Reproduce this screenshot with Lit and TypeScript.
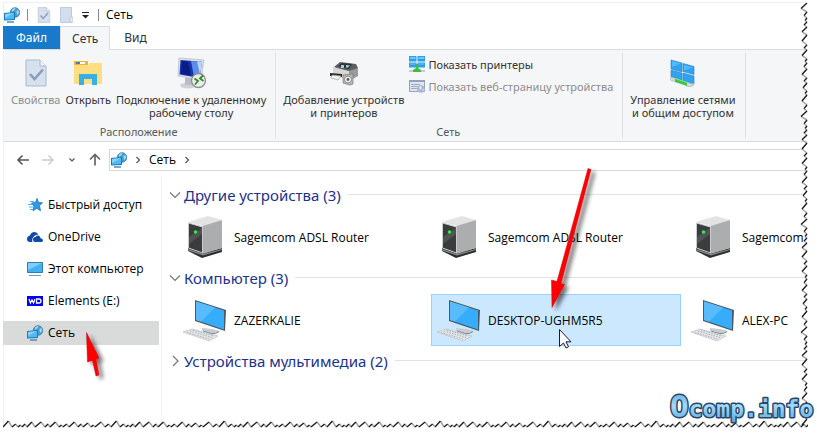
import { LitElement, html, svg, css } from "lit";
import { customElement } from "lit/decorators.js";
import { classMap } from "lit/directives/class-map.js";

const network = html`<svg class="ic" viewBox="0 0 16 16" width="16" height="16" aria-hidden="true">
  <circle cx="11" cy="5.500" r="4.800" fill="#4a9fd0" stroke="#3b7ea6" stroke-width=".8" />
  <path d="M8 2.500q2-2 3.500-1.500l-1 2-1.500 1-1 1zM12.500 4l2-1 .5 3-2 2z" fill="#a9d8ef" />
  <path d="M0 6l11-1v8L0 13.500z" fill="#1f78b4" />
  <path d="M1 7l9-1v6l-9 .5z" fill="#4fb9f5" /><path d="M1 7l9-1-9 5z" fill="#86d3fb" />
  <path d="M3 15h7" stroke="#4d8db4" stroke-width="1.500" />
</svg>`;

const docCheck = (w: number, h: number) => html`<svg class="ic" viewBox="0 0 22 28" width=${w} height=${h} aria-hidden="true">
  <path d="M1 1h14l6 6v20H1z" fill="#d6e0ee" stroke="#a9b9d0" />
  <path d="M15 1v6h6" fill="#eef3f9" stroke="#a9b9d0" />
  <path d="M5 15l4.500 5L18 10.500" fill="none" stroke="#8c9dbb" stroke-width="2.600" />
</svg>`;

const folder = html`<svg class="ic" viewBox="0 0 30 26" width="30" height="26" aria-hidden="true">
  <path d="M1 1h14v4h-14z" fill="#f3b52a" /><path d="M3 2h9v2H3z" fill="#fff" /><path d="M3 2h4v2H3z" fill="#3f7fc4" />
  <path d="M1 5h14l2-2h12v21H1z" fill="#fcdf83" />
  <path d="M6 25V14h18v11h-5v-6h-8v6z" fill="#36b1e5" />
</svg>`;

const remote = html`<svg class="ic" viewBox="0 0 32 32" width="32" height="32" aria-hidden="true">
  <ellipse cx="13" cy="28.500" rx="8" ry="3" fill="#cfd1d6" /><path d="M10 21h7v7h-7z" fill="#b9bcc4" />
  <path d="M4 1l25 2-3 20-23-4z" fill="#dfe2ea" stroke="#b5b9c5" stroke-width=".7" />
  <path d="M5.500 3 27 4.700 24.500 21 4.500 17.500z" fill="#1733ae" />
  <path d="M16 4l11 .7L24.500 21 19 20z" fill="#5d8ee9" /><path d="M22 4.300l5 .4-2 13z" fill="#bcd6fb" />
  <path d="M7 4l6 .5 3 14-10-2z" fill="#0a1d84" />
  <circle cx="23.500" cy="23.500" r="7" fill="#ececec" stroke="#8b8b8b" stroke-width="1.300" />
  <path d="M19.500 21.500l3.500 2.500-3 3.500M28 18.500l-3 3 3.500 2.500" fill="none" stroke="#2b8f2e" stroke-width="1.800" />
</svg>`;

const printer = html`<svg class="ic" viewBox="0 0 30 26" width="30" height="26" aria-hidden="true">
  <path d="M5 7l6-5 16 2 2 4-9 6z" fill="#5c5f63" /><path d="M9 6l4-3 10 1-3 5z" fill="#303438" />
  <path d="M12 5h3v3h-3zM17 5l4 .5-2 2h-2z" fill="#9fd1dd" />
  <path d="M4 7l16 4v9L4 15z" fill="#d7d7d5" /><path d="M20 11l9-3v8l-9 5z" fill="#9a9a98" />
  <path d="M1 13l12 1v3L1 16z" fill="#26282a" /><path d="M3 15l9 1-3 4-7-2z" fill="#f4f4f4" stroke="#999" stroke-width=".6" />
  <path d="M14 15l10-1v10l-3 1-7-2z" fill="#bdbdbb" stroke="#777" stroke-width=".7" />
  <circle cx="19" cy="19.500" r="3.500" fill="#efefef" stroke="#777" stroke-width=".8" /><circle cx="19" cy="19.500" r="1.400" fill="#55585b" />
</svg>`;

const panes = html`<svg class="ic" viewBox="0 0 16 16" width="16" height="16" aria-hidden="true">
  <path d="M0 0h7.500v5.500H0zM8.500 0H16v5.500H8.500zM0 6.500h7.500v5H0zM8.500 6.500H16v5H8.500z" fill="#2f9fe6" />
  <path d="M1 1h5.500v2H1zM9.500 1H15v2H9.500zM1 7.500h5.500v1H1zM9.500 7.500H15v1H9.500z" fill="#6cc5fb" />
  <path d="M0 14h16v2H0z" fill="#c7cccf" /><path d="M7 8h2v4l3 2v2H4v-2l3-2z" fill="#3fbd3c" />
</svg>`;

const webpage = html`<svg class="ic" viewBox="0 0 16 14" width="16" height="14" aria-hidden="true">
  <path d="M.5 1.500h15v11H.5z" fill="#dfe6f0" stroke="#93a3bd" /><path d="M0 1h16v2H0z" fill="#93a3bd" />
  <path d="M2 5.500h9M2 7.500h7M2 9.500h7" stroke="#9eabc0" /><circle cx="12" cy="10" r="3.800" fill="#a9b8ce" />
  <path d="M10 8l2-1 1 2-2 2zM13 10h2l-1 2z" fill="#dce4ee" />
</svg>`;

const center = html`<svg class="ic" viewBox="0 0 25 28" width="25" height="28" aria-hidden="true">
  <path d="M1 1l11 3v9L1 10zM13 4.500l11 3v8l-11-3zM1 11l11 3v7L1 18zM13 14l11 3v8l-11-3z" fill="#2fa2f0" stroke="#2383c9" stroke-width=".6" />
  <path d="M2 2l9 2.500L2 8zM14 6l9 2.500-9 3z" fill="#55b8fa" />
  <path d="M0 19q1-2 4 0l3 1v3l-6-1.500zM17 23l5 2 2-1v2l-3 2-5-1z" fill="#d5d8da" stroke="#9fa3a6" stroke-width=".5" />
  <path d="M5 19l12 4v4L5 23z" fill="#43c24a" /><path d="M5 19l12 4v1L5 20z" fill="#8be28a" />
</svg>`;

const star = html`<svg class="ic" viewBox="0 0 16 14" width="16" height="14" aria-hidden="true">
  <path d="M10 .5l1.500 4 4 .3-3 2.900 1 5-3.700-2.400L6 12.700 7 8.400 4.500 5l4-.5z" fill="#2d9be8" stroke="#1b6fb4" stroke-width=".8" />
  <path d="M3 3.500h4M1 6.500h5M2 9h4M3 11.500h3" stroke="#4fb0ee" />
</svg>`;

const cloud = html`<svg class="ic" viewBox="0 0 16 12" width="16" height="12" aria-hidden="true">
  <path d="M0 8q0-3 3-3.500Q4 1 7.500 1q2.500 0 4 2.500-4 0-6 4-.8 1.700 0 3.500H3Q0 11 0 8z" fill="#0f4ba3" />
  <path d="M6 8.500Q6 6 8.500 6q1.500-2 3.500-1.200 1.500.7 1.500 2.400 2.500.3 2.500 2.300 0 1.500-2 1.500H8q-2 0-2-2.500z" fill="#0f4ba3" />
</svg>`;

const pc = html`<svg class="ic" viewBox="0 0 16 14" width="16" height="14" aria-hidden="true">
  <path d="M.5.5h15v10H.5z" fill="#43b0f1" stroke="#2d7fb3" /><path d="M1 1h14L1 8z" fill="#7fcdf8" /><path d="M2 13.500h12" stroke="#6a9dbd" />
</svg>`;

const wd = html`<svg class="ic" viewBox="0 0 16 10" width="16" height="10" aria-hidden="true">
  <path d="M0 0h16v10H0z" fill="#0000f2" /><path d="M2 3l1.500 4L5 4l1.500 3L8 3M9 3h3q2 0 2 2t-2 2H9.500V4" fill="none" stroke="#fff" stroke-width="1.300" />
</svg>`;

const router = html`<svg class="big" viewBox="0 0 43 44" width="43" height="44" aria-hidden="true">
  <path d="M5 36l14 7 20-6v-4l-19 5-15-5z" fill="#2b2d2e" /><path d="M5 34l15 5 19-5v1l-19 5.500L5 35.500z" fill="#888" />
  <path d="M5 7 25 1l14 4-19 6z" fill="#e2e3e3" />
  <path d="M19.500 11 39 5v28l-19.500 6z" fill="#abadae" />
  <path d="M5.500 8l14 4v26l-14-5z" fill="#3a3d3e" stroke="#c9cbcb" /><path d="M6 22l13-9v6L6 29z" fill="#505354" />
  <circle cx="12.500" cy="17" r="1.800" fill="#2ff03a" />
</svg>`;

const computer = html`<svg class="big" viewBox="0 0 43 44" width="43" height="44" aria-hidden="true">
  <path d="M19 30l10 1 8 2q-4 4-9 3l-8-3q-2-1-1-3z" fill="#c6ccd1" /><path d="M20 33l8 2.500q5 1 8-2" fill="none" stroke="#858c92" />
  <path d="M12 2l31 10-1 21-30-10z" fill="#4d5860" /><path d="M13 3.500 41 12.500v19L13 22z" fill="#36adfb" />
  <path d="M13 3.500l19 6L18 23.500l-5-1.500z" fill="#58bcfc" />
  <path d="M0 34l9-3 26 7-9 5z" fill="#e3e5e8" stroke="#b6babe" stroke-width=".6" />
  <path d="M4 34.500l22 6.500M7 33l22 6.500M10 32l21 6" stroke="#aeb3b8" stroke-dasharray="1.500 1.200" />
</svg>`;

const chev = (d: string, cls: string) => html`<svg class=${cls} viewBox="0 0 12 12" width="12" height="12" aria-hidden="true"><path d=${d} fill="none" stroke="currentColor" stroke-width="1.2" /></svg>`;
const RIGHT = "M4.500 3l3 3-3 3";
const DOWN = "M3.500 4.500L6 7l2.500-2.500";

/* Depth and length of each tooth along the torn paper edge. */
const TEETH: [number, number][] = [[7, 9], [4, 6], [3, 4], [4, 5], [6, 8], [6, 10], [4, 5], [6, 9], [3, 4], [4, 6], [6, 9], [4, 5], [5, 8], [3, 4], [6, 10], [4, 6]];
const TEAR = TEETH.reduce((sum, t) => sum + t[1], 0);

const tear = (vertical: boolean) => {
  const at = (depth: number, along: number) => (vertical ? `${8 - depth} ${along}` : `${along} ${8 - depth}`);
  let along = 0;
  let edge = `M${at(0, 0)}`;
  let dark = "";
  let soft = "";
  for (const [depth, len] of TEETH) {
    const mid = along + len * 0.6;
    edge += `L${at(depth, mid)}L${at(0, along + len)}`;
    dark += `M${at(1, along)}L${at(depth, mid)}`;
    soft += `M${at(depth, mid)}L${at(1, along + len)}`;
    along += len;
  }
  const id = vertical ? "tear-v" : "tear-h";
  return html`<svg class=${vertical ? "tear-right" : "tear-bottom"} aria-hidden="true">
    <defs><pattern id=${id} width=${vertical ? 12 : TEAR} height=${vertical ? TEAR : 12} patternUnits="userSpaceOnUse">
      ${svg`<path d="${edge}${vertical ? `V${TEAR}H12V0` : `H${TEAR}V12H0`}z" fill="#fff" />
      <path d=${soft} fill="none" stroke="#a4a4a4" stroke-width="1.5" />
      <path d=${dark} fill="none" stroke="#1c1c1c" stroke-width="1.4" />`}
    </pattern></defs>
    <rect width="100%" height="100%" fill="url(#${id})" />
  </svg>`;
};

@customElement("app-root")
export class AppRoot extends LitElement {
  static styles = css`
    :host { display: block; font: 12px/13px "Open Sans", "Noto Sans", sans-serif; color: #000; background: #fff; }
    * { box-sizing: border-box; }
    button { font: inherit; color: inherit; background: none; border: 0; padding: 0; margin: 0; text-align: inherit; }
    a { color: inherit; text-decoration: none; }
    svg { display: block; flex: none; }
    .page { position: relative; min-height: 100vh; padding: 2px 9px 8px 3px; display: flex; overflow: hidden; }
    .window { flex: 1; min-width: 0; display: flex; flex-direction: column; border: 1px solid #f0f0f0; border-width: 1px 0 0 1px; }
    .title { height: 23px; display: flex; align-items: center; }
    .title .sep { width: 1px; height: 12px; background: #8a8a8a; }
    .quick { display: flex; align-items: center; gap: 9px; padding: 0 7px; }
    .tabs, .ribbon { font-family: "Noto Sans", sans-serif; font-size: 11px; }
    .tabs { display: flex; height: 23px; }
    .tab { padding: 0 14px; color: #333; font-size: 12px; }
    .file { background: #1979ca; color: #fff; margin-left: -1px; padding: 0 13px; }
    .active { background: #f5f6f7; border: 1px solid #dadbdc; border-bottom: 0; margin-bottom: -1px; position: relative; padding: 0 11px; }
    .ribbon { display: flex; height: 93px; background: #f5f6f7; border: 1px solid #dadbdc; border-width: 1px 0; padding: 3px 0; color: #444; }
    .group { display: flex; flex-direction: column; border-right: 1px solid #dfe0e1; padding: 0 9px 0 7px; }
    .tools { display: flex; flex: 1; gap: 5px; }
    .tool { display: flex; flex-direction: column; align-items: center; text-align: center; white-space: pre; color: #333; }
    .pic { height: 40px; display: flex; align-items: center; }
    .off { color: #8d8d8d; }
    .cap { text-align: center; line-height: 13px; color: #5a5a5a; }
    .list { display: flex; flex-direction: column; gap: 6px; padding-top: 3px; }
    .small { display: flex; align-items: center; gap: 3px; height: 16px; color: #333; white-space: nowrap; }
    .small.off { color: #8d8d8d; }
    .address { display: flex; align-items: center; padding-top: 6px; height: 29px; color: #555; }
    .nav { display: flex; align-items: center; gap: 11px; padding: 0 8px 0 12px; }
    .path { flex: 1; height: 22px; display: flex; align-items: center; gap: 5px; border: 1px solid #d9d9d9; border-right: 0; padding-left: 1px; }
    .path button { color: #000; }
    .body { display: flex; flex: 1; padding-top: 6px; }
    aside { width: 158px; border-right: 1px solid #f0f0f0; padding: 16px 2px 0 0; display: flex; flex-direction: column; gap: 8px; }
    .place { display: flex; align-items: center; gap: 5px; height: 24px; padding: 0 0 1px 24px; margin-left: -1px; }
    .current { background: #d9dbdb; }
    main { flex: 1; min-width: 0; padding: 3px 0 0 7px; overflow: hidden; }
    .head { display: flex; align-items: center; gap: 3px; height: 31px; font-family: "Noto Sans", sans-serif; font-size: 15px; line-height: 20px; padding-bottom: 2px; color: #1e3287; width: 100%; white-space: nowrap; }
    .head .rule { flex: 1; height: 1px; background: #e2e2e2; margin-left: 4px; }
    .fold { color: #777; }
    .tiles { display: flex; gap: 4px; padding-left: 8px; }
    .tile { flex: none; width: 250px; height: 52px; display: flex; align-items: center; gap: 8px; padding: 0 5px; border: 1px solid transparent; white-space: nowrap; }
    .picked { background: #cce8ff; border-color: #99d1ff; }
    .tear-right { position: absolute; right: 5px; top: 3px; width: 12px; height: calc(100% - 13px); }
    .tear-bottom { position: absolute; left: 3px; bottom: 4px; width: calc(100% - 12px); height: 12px; }
    .notes { position: absolute; left: 0; top: 0; }
    .logo { position: absolute; right: 0; bottom: 0; }
    .mark { font: bold 23px "DejaVu Sans Mono", monospace; }
    .initial { font-size: 31px; }
  `;

  private places = [
    { icon: star, text: "Быстрый доступ" },
    { icon: cloud, text: "OneDrive" },
    { icon: pc, text: "Этот компьютер" },
    { icon: wd, text: "Elements (E:)" },
    { icon: network, text: "Сеть", current: true },
  ];

  private groups = [
    { name: "Другие устройства (3)", icon: router, open: true, items: ["Sagemcom ADSL Router", "Sagemcom ADSL Router", "Sagemcom"] },
    { name: "Компьютер (3)", icon: computer, open: true, items: ["ZAZERKALIE", "DESKTOP-UGHM5R5", "ALEX-PC"] },
    { name: "Устройства мультимедиа (2)", icon: router, open: false, items: [] },
  ];

  private tool(icon: unknown, text: string, off = false) {
    return html`<button class=${classMap({ tool: true, off })} ?disabled=${off}><span class="pic">${icon}</span>${text}</button>`;
  }

  render() {
    return html`<div class="page">
      <div class="window">
        <header class="title">
          ${network}
          <div class="quick">
            <span class="sep"></span>${docCheck(14, 16)}
            <svg width="13" height="16" viewBox="0 0 13 16" aria-hidden="true"><path d="M.5.5h11v15H.5z" fill="#d3deed" stroke="#bccbe0" /><path d="M10 10h3v5h-3z" fill="#e8eef6" stroke="#bccbe0" /></svg>
            <svg width="7" height="8" viewBox="0 0 7 8" aria-hidden="true"><path d="M0 1.500h7" stroke="#222" /><path d="M0 4h7L3.500 7.500z" fill="#222" /></svg>
            <span class="sep"></span>
          </div>
          <span>Сеть</span>
        </header>
        <nav class="tabs"><button class="tab file">Файл</button><button class="tab active">Сеть</button><button class="tab">Вид</button></nav>
        <section class="ribbon">
          <div class="group">
            <div class="tools">${this.tool(docCheck(22, 28), "Свойства", true)}${this.tool(folder, "Открыть")}${this.tool(remote, "Подключение к удаленному\nрабочему столу")}</div>
            <div class="cap">Расположение</div>
          </div>
          <div class="group">
            <div class="tools">${this.tool(printer, "Добавление устройств\nи принтеров")}
              <div class="list"><button class="small">${panes}Показать принтеры</button><button class="small off" disabled>${webpage}Показать веб-страницу устройства</button></div>
            </div>
            <div class="cap">Сеть</div>
          </div>
          <div class="group"><div class="tools">${this.tool(center, "Управление сетями\nи общим доступом")}</div></div>
        </section>
        <div class="address">
          <div class="nav">
            <button aria-label="Назад"><svg width="14" height="12" viewBox="0 0 14 12"><path d="M13 6H2M6.500 1.500L2 6l4.500 4.500" fill="none" stroke="#555" stroke-width="1.600" /></svg></button>
            <button aria-label="Вперед"><svg width="14" height="12" viewBox="0 0 14 12"><path d="M1 6h11M7.500 1.500L12 6l-4.500 4.500" fill="none" stroke="#ccc" stroke-width="1.400" /></svg></button>
            <button aria-label="Недавние">${chev(DOWN, "mini")}</button>
            <button aria-label="Вверх"><svg width="12" height="13" viewBox="0 0 12 13"><path d="M6 12.500V2M1 6.500L6 1.500l5 5" fill="none" stroke="#666" stroke-width="1.700" /></svg></button>
          </div>
          <div class="path">${network}${chev(RIGHT, "mini")}<button>Сеть</button>${chev(RIGHT, "mini")}</div>
        </div>
        <div class="body">
          <aside>${this.places.map((p) => html`<a href="#" class=${classMap({ place: true, current: !!p.current })}>${p.icon}<span>${p.text}</span></a>`)}</aside>
          <main>${this.groups.map((g) => html`
            <button class="head" aria-expanded=${g.open ? "true" : "false"}>${chev(g.open ? "M1 3.500l5 5 5-5" : "M4 1l5 5-5 5", "fold")}<span>${g.name}</span><span class="rule"></span></button>
            ${g.items.length ? html`<div class="tiles">${g.items.map((t) => html`<button class=${classMap({ tile: true, picked: t.startsWith("DESKTOP") })}>${g.icon}<span>${t}</span></button>`)}</div>` : ""}`)}
          </main>
        </div>
      </div>
      ${tear(true)}${tear(false)}
      <svg class="notes" width="600" height="390" viewBox="0 0 600 390" aria-hidden="true">
        <defs><filter id="shade" x="-50%" y="-20%" width="220%" height="150%"><feDropShadow dx="4" dy="3" stdDeviation="2" flood-color="#000" flood-opacity=".55" /></filter></defs>
        <g fill="#f00" stroke="#c80000" stroke-width=".5" filter="url(#shade)">
          <path d="M588 168.500l3 1-30 114 3.500 1L552 307.500l-.5-27.500 5.500 1.500z" />
          <path d="M86.500 332.500L99 358l-3 1.500 3 15.500-3 1-3.500-15.500-5 1.500z" />
        </g>
        <path d="M559.500 329.500v17l4-3.500 2.500 5 2.500-1.200-2.500-5h5z" fill="#fff" stroke="#1a1a2a" />
      </svg>
      <svg class="logo" width="150" height="48" viewBox="0 0 150 48" role="img" aria-label="Ocomp.info">
        <defs><linearGradient id="ice" x2="0" y2="1"><stop offset="0" stop-color="#5c9fd6" /><stop offset=".5" stop-color="#a4dafa" /><stop offset="1" stop-color="#5a9fd8" /></linearGradient></defs>
        <text class="mark" x="3" y="29" fill="url(#ice)" stroke="#254866" stroke-width="3" stroke-linejoin="round" paint-order="stroke"><tspan class="initial">O</tspan>comp.info</text>
      </svg>
    </div>`;
  }
}
